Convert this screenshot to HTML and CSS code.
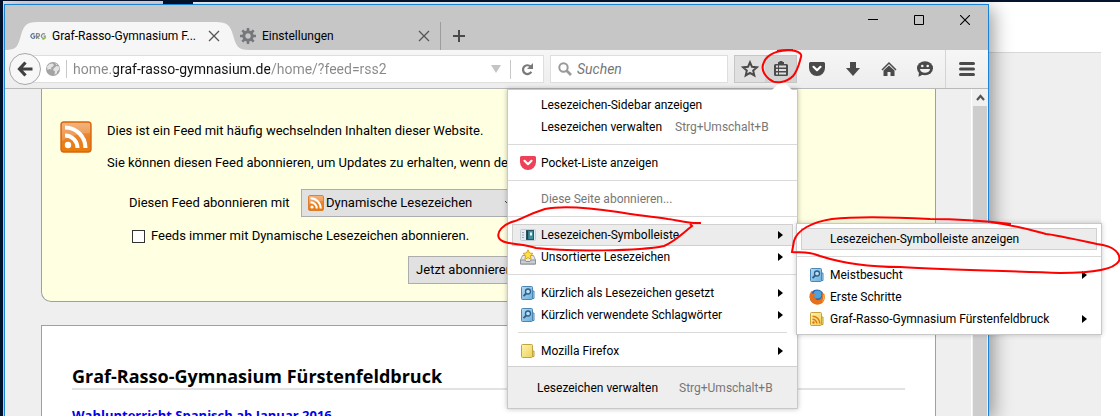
FILE: index.html
```
<!DOCTYPE html>
<html lang="de">
<head>
  <meta charset="UTF-8">
  <meta name="viewport" content="width=device-width, initial-scale=1.0">
  <title>Graf-Rasso-Gymnasium Fürstenfeldbruck</title>
  <link rel="stylesheet" href="styles.css">
</head>
<body>
  <!-- shared icons -->
  <svg class="defs" width="0" height="0" aria-hidden="true">
    <defs>
      <linearGradient id="orange" x1="0" y1="0" x2="0" y2="1">
        <stop offset="0" stop-color="#f0a566"/>
        <stop offset="0.5" stop-color="#e98127"/>
        <stop offset="1" stop-color="#e87d0a"/>
      </linearGradient>
      <linearGradient id="blue" x1="0" y1="0" x2="1" y2="1">
        <stop offset="0" stop-color="#b4daf1"/>
        <stop offset="1" stop-color="#6fb0dc"/>
      </linearGradient>
      <linearGradient id="yellow" x1="0" y1="0" x2="1" y2="1">
        <stop offset="0" stop-color="#fdf3b0"/>
        <stop offset="1" stop-color="#ecd25c"/>
      </linearGradient>
      <symbol id="i-rss" viewBox="0 0 32 32">
        <rect x="1" y="1" width="30" height="30" rx="3" fill="url(#orange)" stroke="#d9660f" stroke-width="1.4"/>
        <path d="M2 2h28v10C20 12 10 15 2 20z" fill="#fff" opacity=".18"/>
        <circle cx="8" cy="24" r="3.2" fill="#fff"/>
        <path d="M5 14.500a12.500 12.500 0 0 1 12.500 12.500M5 6.500a20.500 20.500 0 0 1 20.500 20.500" fill="none" stroke="#fff" stroke-width="4"/>
      </symbol>
      <symbol id="i-search-folder" viewBox="0 0 16 16">
        <path d="M12 6h2v7.500h-2z" fill="#b9dcf2" stroke="#4a87b5"/>
        <rect x="1.500" y="1.500" width="11" height="13" rx="1" fill="url(#blue)" stroke="#4a87b5"/>
        <circle cx="8" cy="6.500" r="2.500" fill="#b9dff5" stroke="#2d5f8a" stroke-width="1.300"/>
        <path d="M6.200 8.500L3.500 11.200" stroke="#2d5f8a" stroke-width="1.800"/>
      </symbol>
      <symbol id="i-folder" viewBox="0 0 16 16">
        <path d="M12 8h2v5.500h-2z" fill="#f8e68a" stroke="#b99a32"/>
        <rect x="1.500" y="1.500" width="11" height="13" rx="1" fill="url(#yellow)" stroke="#c2a43c"/>
      </symbol>
      <symbol id="i-feed-folder" viewBox="0 0 16 16">
        <path d="M12 6h2v7.500h-2z" fill="#f8e68a" stroke="#b99a32"/>
        <rect x="1.500" y="1.500" width="11" height="13" rx="1" fill="url(#yellow)" stroke="#c2a43c"/>
        <circle cx="4.500" cy="11.500" r="1.200" fill="#e5780b"/>
        <path d="M3.500 8.200a4.300 4.300 0 0 1 4.300 4.300M3.500 5.200a7.300 7.300 0 0 1 7.300 7.300" fill="none" stroke="#e5780b" stroke-width="1.500"/>
      </symbol>
      <symbol id="i-close" viewBox="0 0 12 12">
        <path d="M1 1l10 10M11 1L1 11" stroke="#555" stroke-width="1.300"/>
      </symbol>
      <symbol id="i-pocket" viewBox="0 0 16 16">
        <path d="M1.500 1h13A1.500 1.500 0 0 1 16 2.500V7a8 8 0 0 1-16 0V2.500A1.500 1.500 0 0 1 1.500 1z"/>
        <path d="M4.500 5.800L8 9.200l3.500-3.400" fill="none" stroke="#fff" stroke-width="2.200" stroke-linecap="round" stroke-linejoin="round"/>
      </symbol>
    </defs>
  </svg>

  <div class="back-top"></div>
  <div class="back-page">
    <div class="back-page-head"></div>
  </div>

  <div class="window">
    <header class="titlebar">
      <div class="tab active">
        <svg class="tab-shape" viewBox="0 0 244 28" preserveAspectRatio="none" aria-hidden="true">
          <path d="M0 28C12 28 13 24 16 13C19 3 22 0 32 0H211C222 0 225 3 228 13C231 24 233 28 244 28z" fill="#f6f6f6"/>
        </svg>
        <svg class="favicon" viewBox="0 0 16 16" aria-hidden="true">
          <path d="M4.500 6.300a2.200 2.200 0 1 0 .2 3.300V8.200H3.200" fill="none" stroke="#55759a" stroke-width="1.200"/>
          <path d="M6.500 11V5.700h1.700a1.300 1.300 0 0 1 0 2.700H6.600l2.700 2.500" fill="none" stroke="#888" stroke-width="1.200"/>
          <path d="M15 6.300a2.200 2.200 0 1 0 .2 3.300V8.200h-1.600" fill="none" stroke="#8a8f88" stroke-width="1.200"/>
          <path d="M12 10.700l1.500.5 1.700-1" fill="none" stroke="#79c143" stroke-width="1.200"/>
        </svg>
        <span class="tab-label">Graf-Rasso-Gymnasium F...</span>
        <button class="tab-close" aria-label="Tab schließen"><svg width="12" height="12"><use href="#i-close"/></svg></button>
      </div>
      <div class="tab">
        <svg class="favicon" viewBox="0 0 16 16" aria-hidden="true">
          <circle cx="8" cy="8" r="4.200" fill="none" stroke="#74777b" stroke-width="3"/>
          <path d="M8 0v3M8 13v3M0 8h3M13 8h3M2.300 2.300l2.200 2.200M11.500 11.500l2.200 2.200M2.300 13.700l2.200-2.200M11.500 4.500l2.200-2.200" stroke="#74777b" stroke-width="2.600"/>
        </svg>
        <span class="tab-label">Einstellungen</span>
        <button class="tab-close" aria-label="Tab schließen"><svg width="12" height="12"><use href="#i-close"/></svg></button>
      </div>
      <button class="new-tab" aria-label="Neuer Tab">
        <svg width="12" height="12" viewBox="0 0 12 12"><path d="M6 0v12M0 6h12" stroke="#4a4a4a" stroke-width="2"/></svg>
      </button>
      <div class="window-controls">
        <button aria-label="Minimieren"><svg width="10" height="10"><path d="M0 4.500h10" stroke="#000"/></svg></button>
        <button aria-label="Maximieren"><svg width="10" height="10"><path d="M.5.500h9v9h-9z" fill="none" stroke="#000"/></svg></button>
        <button aria-label="Schließen"><svg width="10" height="10"><path d="M0 0l10 10M10 0L0 10" stroke="#000" stroke-width="1.100"/></svg></button>
      </div>
    </header>

    <nav class="toolbar">
      <button class="back" aria-label="Zurück">
        <svg width="16" height="16" viewBox="0 0 16 16"><path d="M8.500 1.500L2.500 8l6 6.500M3 8h12.500" fill="none" stroke="#404040" stroke-width="3.200"/></svg>
      </button>
      <div class="urlbar">
        <svg class="globe" width="14" height="14" viewBox="0 0 14 14" aria-hidden="true">
          <circle cx="7" cy="7" r="7" fill="#a3a3a3"/>
          <path d="M1 4.500L3.500 2l3-.5L8 3 6.500 5 5 5.500 5.500 7.500 3.500 7 1.500 8zM8 6l2.500-2 2.500.5.300 3L11.500 9l-1 3-2 .5.500-3L7 8zM9 1l2.500 1.500-1 .8z" fill="#e4e4e4"/>
        </svg>
        <input class="url" type="text" aria-label="Adresse" value="home.graf-rasso-gymnasium.de/home/?feed=rss2">
        <svg class="url-drop" width="10" height="8" aria-hidden="true"><path d="M0 0h10L5 8z" fill="#c4c4c4"/></svg>
        <button class="reload" aria-label="Neu laden">
          <svg width="13" height="13" viewBox="0 0 13 13"><path d="M10.300 8.700A4.400 4.400 0 1 1 9.600 3.600" fill="none" stroke="#7a7a7a" stroke-width="2.200"/><path d="M12 0v6H6z" fill="#7a7a7a"/></svg>
        </button>
      </div>
      <div class="searchbar">
        <svg width="14" height="14" viewBox="0 0 14 14" aria-hidden="true"><circle cx="5.500" cy="5.500" r="4.200" fill="none" stroke="#999" stroke-width="2"/><path d="M8.500 8.500l4.500 4.500" stroke="#999" stroke-width="2.600"/></svg>
        <input type="text" aria-label="Suche" placeholder="Suchen">
      </div>
      <div class="bookmark-group">
        <button class="star" aria-label="Lesezeichen hinzufügen">
          <svg width="18" height="18" viewBox="0 0 18 18"><path d="M9 2.300l2 4.500 4.900.5-3.700 3.300 1.100 4.800L9 12.900l-4.300 2.500 1.100-4.800L2.100 7.300 7 6.800z" fill="none" stroke="#4a4a4a" stroke-width="2"/></svg>
        </button>
        <div class="bookmarks">
          <button class="bookmarks-btn" aria-label="Lesezeichen anzeigen">
            <svg width="16" height="16" viewBox="0 0 16 16"><path d="M5 3V1h1.500V0h3v1H11v2h2.500A1.500 1.500 0 0 1 15 4.500v9a1.500 1.500 0 0 1-1.500 1.500h-11A1.500 1.500 0 0 1 1 13.500v-9A1.500 1.500 0 0 1 2.500 3z" fill="#4a4a4a"/><path d="M3 5.500h2M6 5.500h7M3 9h2M6 9h7M3 12.500h2M6 12.500h7" stroke="#dedede" stroke-width="1.800"/></svg>
          </button>

          <div class="panel">
            <svg class="panel-arrow" width="20" height="10" aria-hidden="true"><path d="M0 10L7 3q3-3 6 0l7 7z" fill="#fff"/></svg>
            <ul class="menu">
              <li><button class="item"><span class="icon"></span>Lesezeichen-Sidebar anzeigen</button></li>
              <li><button class="item"><span class="icon"></span>Lesezeichen verwalten <kbd>Strg+Umschalt+B</kbd></button></li>
              <li class="sep"></li>
              <li><button class="item"><svg class="icon pocket"><use href="#i-pocket"/></svg>Pocket-Liste anzeigen</button></li>
              <li class="sep"></li>
              <li><button class="item" disabled><span class="icon"></span>Diese Seite abonnieren...</button></li>
              <li class="sep"></li>
              <li class="has-sub">
                <button class="item selected">
                  <svg class="icon" viewBox="0 0 16 16"><rect x=".5" y="2.500" width="15" height="11" rx="1" fill="#e3eaf0" stroke="#c3ccd4"/><path d="M2 5.500h2M2 8h2M2 10.500h2" stroke="#9aa7b3"/><rect x="6.500" y="3.500" width="7" height="9" fill="#3f8f9c" stroke="#2b5566"/><path d="M7.500 4v8" stroke="#1d3d50" stroke-width="1.500"/><rect x="10" y="5.500" width="2" height="3" fill="#e9f5f6"/></svg>
                  Lesezeichen-Symbolleiste<span class="more"></span>
                </button>
                <div class="submenu">
                  <ul class="menu">
                    <li><button class="item selected"><span class="icon"></span>Lesezeichen-Symbolleiste anzeigen</button></li>
                    <li class="sep"></li>
                    <li><button class="item"><svg class="icon"><use href="#i-search-folder"/></svg>Meistbesucht<span class="more"></span></button></li>
                    <li><button class="item">
                      <svg class="icon" viewBox="0 0 16 16"><circle cx="8" cy="7.800" r="7.300" fill="#2a62b0"/><circle cx="8.500" cy="5.500" r="4" fill="#4fa3dd"/><path d="M.8 4.500C.2 8 .6 11 2.800 13.300c3 3.200 8.200 3 11 .2 2.200-2.300 2.600-6 1.300-9.300-.2 1-.4 1.400-.8 1.700-.2-1-.8-2.200-1.600-2.900.5 2.200.8 4.200-.3 6-1.300 2-4.200 2.600-6.100 1C5.800 9.700 7 9.600 8 9c-1-.8-3-.3-3.300-1.500-.2-.9 1-.9 1.900-1.500C5.800 5 4.800 4.600 3.800 4.700 3 4 2.800 3 3.200 1.800 2 2.400 1.300 3.500 1.200 5z" fill="#e8701a"/><path d="M15.300 5c.6 3.400-.4 6.500-2.500 8.300 1-2 1.500-3.600 1.500-7.400z" fill="#fcc52a"/></svg>
                      Erste Schritte</button></li>
                    <li><button class="item"><svg class="icon"><use href="#i-feed-folder"/></svg>Graf-Rasso-Gymnasium Fürstenfeldbruck<span class="more"></span></button></li>
                  </ul>
                </div>
              </li>
              <li><button class="item">
                <svg class="icon" viewBox="0 0 16 16"><path d="M2.500 6.500h11l2 4.500v4H.5v-4z" fill="#e6e9ec" stroke="#9aa0a6"/><path d="M.5 11H5l1 1.500h4L11 11h4.500v4H.5z" fill="#c9ced3" stroke="#8b9198"/><path d="M8 .8l1.500 3.200 3.500.4-2.600 2.400.7 3.500L8 8.600l-3.100 1.700.7-3.500L3 4.400 6.500 4z" fill="#ffe04a" stroke="#d6a51c"/></svg>
                Unsortierte Lesezeichen<span class="more"></span></button></li>
              <li class="sep"></li>
              <li><button class="item"><svg class="icon"><use href="#i-search-folder"/></svg>Kürzlich als Lesezeichen gesetzt<span class="more"></span></button></li>
              <li><button class="item"><svg class="icon"><use href="#i-search-folder"/></svg>Kürzlich verwendete Schlagwörter<span class="more"></span></button></li>
              <li class="sep inset"></li>
              <li><button class="item"><svg class="icon"><use href="#i-folder"/></svg>Mozilla Firefox<span class="more"></span></button></li>
            </ul>
            <button class="panel-footer">Lesezeichen verwalten <kbd>Strg+Umschalt+B</kbd></button>
          </div>
        </div>
      </div>
      <div class="tools">
        <button aria-label="Pocket"><svg class="icon dark"><use href="#i-pocket"/></svg></button>
        <button aria-label="Downloads"><svg class="icon" viewBox="0 0 16 16"><path d="M5 1h6v6h4l-7 8-7-8h4z" fill="#4a4a4a"/></svg></button>
        <button aria-label="Startseite"><svg class="icon" viewBox="0 0 16 16"><path d="M1 9l7-7 7 7" fill="none" stroke="#4a4a4a" stroke-width="1.500"/><path d="M8 4.500l5.500 5V15H9.500v-4h-3v4h-4V9.500z" fill="#4a4a4a"/></svg></button>
        <button aria-label="Hello"><svg class="icon" viewBox="0 0 16 16"><ellipse cx="8" cy="7.200" rx="8" ry="7" fill="#4a4a4a"/><path d="M2 11l-.5 4.800L7 13z" fill="#4a4a4a"/><circle cx="5.300" cy="5" r="1.300" fill="#f2f2f2"/><circle cx="10.700" cy="5" r="1.300" fill="#f2f2f2"/><path d="M3 8h10a5 3.800 0 0 1-10 0z" fill="#f2f2f2"/></svg></button>
      </div>
      <button class="app-menu" aria-label="Menü öffnen">
        <svg width="16" height="14" viewBox="0 0 16 14"><path d="M1.500 1.500h13M1.500 7h13M1.500 12.500h13" stroke="#4a4a4a" stroke-width="3" stroke-linecap="round"/></svg>
      </button>
    </nav>

    <div class="viewport">
      <main class="page">
        <section class="feed-header">
          <svg class="feed-icon" width="32" height="32" aria-hidden="true"><use href="#i-rss"/></svg>
          <div class="feed-text">
            <p>Dies ist ein Feed mit häufig wechselnden Inhalten dieser Website.</p>
            <p>Sie können diesen Feed abonnieren, um Updates zu erhalten, wenn der</p>
            <form class="subscribe">
              <div class="subscribe-row">
                <label for="reader">Diesen Feed abonnieren mit</label>
                <div class="reader">
                  <svg width="16" height="16" aria-hidden="true"><use href="#i-rss"/></svg>
                  <select id="reader"><option>Dynamische Lesezeichen</option></select>
                  <svg class="chevron" width="10" height="6" aria-hidden="true"><path d="M1 1l4 4 4-4" fill="none" stroke="#444"/></svg>
                </div>
              </div>
              <div class="always">
                <input type="checkbox" id="always">
                <label for="always">Feeds immer mit Dynamische Lesezeichen abonnieren.</label>
              </div>
              <button class="subscribe-btn" type="button">Jetzt abonnieren</button>
            </form>
          </div>
        </section>
        <article class="feed-content">
          <h1>Graf-Rasso-Gymnasium Fürstenfeldbruck</h1>
          <h2><a href="#">Wahlunterricht Spanisch ab Januar 2016</a></h2>
        </article>
      </main>
      <div class="scrollbar">
        <svg width="15" height="17" aria-hidden="true"><path d="M4 11l3.500-4 3.500 4" fill="none" stroke="#555" stroke-width="2.200"/></svg>
        <div class="thumb"></div>
      </div>
    </div>
  </div>

  <svg class="marks" width="1120" height="416" aria-hidden="true">
    <path d="M777 51C792 48 803 52 801 57C799 64 798 70 793 76C787 82 776 85 769 79C762 73 761 68 764 62C767 55 775 50 793 50"/>
    <path d="M701 223C688 224 678 220 668 219C650 216 634 215 618 212C598 209 565 205 545 209C529 214 521 219 515 221C503 224 496 232 499 238C503 245 520 243 536 248C570 252 640 251 664 246C676 241 684 232 692 226L690 224"/>
    <path d="M1011 224C985 221 955 219 930 219C890 217 860 216 832 219C812 222 797 230 794 241L792 252C800 253 808 251 820 256C845 264 870 267 900 267C950 270 1010 271 1060 273C1092 273 1114 270 1119 261C1121 254 1115 246 1097 244C1074 239 1050 234 1046 234C1030 230 1020 226 990 222"/>
  </svg>
</body>
</html>
```
FILE: styles.css
```
* {
  margin: 0;
  padding: 0;
  box-sizing: border-box;
}

body {
  height: 100vh;
  overflow: hidden;
  position: relative;
  background: #04142e;
  font-family: Roboto, "Segoe UI", sans-serif;
  font-size: 12px;
  color: #000;
}

button {
  border: none;
  background: none;
  font: inherit;
  color: inherit;
}

input, select {
  font: inherit;
}

.defs {
  position: absolute;
}

/* windows lying behind the browser */
.back-top {
  position: absolute;
  left: 3px;
  top: 1px;
  width: 160px;
  height: 415px;
  background: #e4dfe8;
}

.back-page {
  position: absolute;
  left: 193px;
  right: 0;
  top: 2px;
  bottom: 0;
  background: #efefef;
  border-right: 19px solid #fff;
}

.back-page-head {
  height: 51px;
  background: #fff;
  border-bottom: 1px solid #d8d8d8;
}

.window {
  position: absolute;
  left: 4px;
  right: 131px;
  top: 4px;
  bottom: 0;
  display: flex;
  flex-direction: column;
  border: 1px solid #1883d7;
  border-bottom: none;
  box-shadow: 4px 4px 18px rgba(0, 0, 0, 0.4);
}

/* tabs */
.titlebar {
  display: flex;
  align-items: flex-end;
  height: 45px;
  background: #c6c6c6;
}

.tab {
  position: relative;
  display: flex;
  align-items: center;
  gap: 6px;
  width: 201px;
  height: 28px;
  padding-right: 10px;
  border-right: 1px solid #9c9c9c;
}

.tab.active {
  width: 235px;
  padding-left: 25px;
  padding-right: 20px;
  border-right: none;
}

.tab-shape {
  position: absolute;
  left: 0;
  top: 0;
  width: 244px;
  height: 28px;
}

.tab > *:not(.tab-shape) {
  position: relative;
}

.favicon {
  width: 16px;
  height: 16px;
}

.tab-label {
  flex: 1;
  white-space: nowrap;
}

.tab-close {
  display: flex;
}

.new-tab {
  display: flex;
  align-items: center;
  height: 28px;
  padding: 0 12px;
}

.window-controls {
  display: flex;
  align-self: flex-start;
  margin-left: auto;
}

.window-controls button {
  display: flex;
  align-items: center;
  justify-content: center;
  width: 46px;
  height: 30px;
}

/* navigation toolbar */
.toolbar {
  display: flex;
  align-items: center;
  height: 39px;
  padding-left: 4px;
  background: linear-gradient(#f6f6f6, #ededed);
  border-bottom: 1px solid #b9b9b9;
}

.back {
  position: relative;
  z-index: 1;
  display: flex;
  align-items: center;
  justify-content: center;
  width: 32px;
  height: 32px;
  border: 1px solid #a8a8a8;
  border-radius: 50%;
  background: #f7f7f7;
}

.urlbar,
.searchbar {
  display: flex;
  align-items: center;
  height: 28px;
  background: #fff;
  border: 1px solid #dedede;
}

.urlbar {
  flex: 1;
  margin-left: -10px;
  padding-left: 14px;
}

.url {
  flex: 1;
  min-width: 0;
  height: 18px;
  margin-left: 6px;
  padding-left: 6px;
  border: none;
  border-left: 1px solid #c8c8c8;
  font-size: 14px;
  color: transparent;
  /* the domain is darker than the rest of the address */
  background: linear-gradient(90deg, #888 47px, #111 47px, #111 203px, #888 203px);
  -webkit-background-clip: text;
  background-clip: text;
}

.url-drop {
  margin-right: 9px;
}

.reload {
  display: flex;
  align-items: center;
  justify-content: center;
  width: 33px;
  height: 19px;
  border-left: 1px solid #c8c8c8;
}

.searchbar {
  width: 178px;
  margin: 0 6px;
  padding-left: 7px;
  gap: 5px;
}

.searchbar input {
  min-width: 0;
  flex: 1;
  border: none;
  font-size: 14px;
}

.searchbar input::placeholder {
  color: #777;
  font-style: italic;
}

.bookmark-group {
  display: flex;
  width: 63px;
  height: 28px;
  background: #e0e0e0;
  border: 1px solid #c6c6c6;
}

.star,
.bookmarks-btn {
  display: flex;
  align-items: center;
  justify-content: center;
  width: 31px;
  height: 26px;
}

.bookmarks {
  position: relative;
}

.bookmarks-btn {
  background: #d2d2d2;
}

.tools {
  display: flex;
  padding: 0 2px;
}

.tools button {
  display: flex;
  align-items: center;
  justify-content: center;
  width: 36px;
  height: 28px;
}

.app-menu {
  display: flex;
  align-items: center;
  justify-content: center;
  width: 43px;
  height: 38px;
  border-left: 1px solid #d4d4d4;
}

.icon {
  flex: none;
  width: 16px;
  height: 16px;
}

.dark {
  fill: #4a4a4a;
}

.pocket {
  fill: #ee4056;
}

/* bookmarks panel */
.panel {
  position: absolute;
  z-index: 10;
  top: 33px;
  right: -2px;
  width: 291px;
  background: #fff;
  border: 1px solid #c8c8c8;
  box-shadow: 0 0 5px rgba(0, 0, 0, 0.25);
}

.panel-arrow {
  position: absolute;
  right: 5px;
  top: -10px;
}

.menu {
  list-style: none;
  padding: 4px;
}

.item {
  display: flex;
  align-items: center;
  width: 100%;
  height: 22px;
  padding: 0 9px 0 7px;
  gap: 5px;
  border: 1px solid transparent;
  text-align: left;
  white-space: nowrap;
}

.item.selected {
  background: #ececec;
  border-color: #d0d0d0;
}

.item:disabled {
  color: #777;
}

.item kbd {
  margin-left: 8px;
}

kbd {
  font-family: inherit;
  color: #777;
}

.more {
  margin-left: auto;
  border: 4px solid transparent;
  border-left: 5px solid #000;
  border-right: none;
}

.sep {
  height: 1px;
  margin: 6px -4px 7px;
  background: #dadada;
}

.sep.inset {
  margin-left: 6px;
  margin-right: 6px;
}

.has-sub {
  position: relative;
}

.submenu {
  position: absolute;
  left: 100%;
  top: -1px;
  width: 306px;
  margin-left: 3px;
  background: #fff;
  border: 1px solid #c8c8c8;
  box-shadow: 0 0 5px rgba(0, 0, 0, 0.2);
}

.panel-footer {
  display: flex;
  align-items: center;
  gap: 21px;
  width: 100%;
  height: 42px;
  padding-left: 29px;
  background: #eee;
  border-top: 1px solid #d0d0d0;
}

/* feed page */
.viewport {
  flex: 1;
  display: flex;
  min-height: 0;
  background: #efefef;
}

.page {
  flex: 1;
  overflow: hidden;
  padding: 0 35px 0 36px;
}

.feed-header {
  display: flex;
  gap: 15px;
  height: 213px;
  padding: 32px 18px 0;
  background: #ffffe1;
  border: 1px solid #a0a0a0;
  border-top: none;
  border-radius: 0 0 10px 10px;
  font-size: 13px;
}

.feed-icon {
  flex: none;
}

.feed-text {
  line-height: 20px;
  white-space: nowrap;
}

.feed-text p {
  margin-bottom: 12px;
}

.subscribe {
  display: flex;
  flex-direction: column;
  width: 414px;
  padding-left: 22px;
}

.subscribe-row {
  display: flex;
  align-items: center;
  justify-content: space-between;
  margin-top: 4px;
}

.reader {
  display: flex;
  align-items: center;
  width: 220px;
  height: 28px;
  padding: 0 6px;
  background: #e1e1e1;
  border: 1px solid #adadad;
}

.reader select {
  flex: 1;
  min-width: 0;
  padding-left: 2px;
  border: none;
  background: none;
  appearance: none;
}

.always {
  display: flex;
  align-items: center;
  gap: 6px;
  height: 20px;
  margin: 9px 0 10px 3px;
}

.always input {
  appearance: none;
  width: 13px;
  height: 13px;
  background: #fff;
  border: 1px solid #333;
}

.subscribe-btn {
  align-self: flex-end;
  width: 113px;
  height: 28px;
  background: #e1e1e1;
  border: 1px solid #adadad;
}

.feed-content {
  margin-top: 23px;
  padding: 38px 30px;
  background: #fff;
  border: 1px solid #a0a0a0;
  font-family: "Open Sans", "Segoe UI", sans-serif;
}

.feed-content h1 {
  font-size: 18px;
  line-height: 24px;
  border-bottom: 2px solid #e2e2e2;
}

.feed-content h2 {
  margin-top: 15px;
  font-size: 13px;
  line-height: 20px;
}

.feed-content a {
  color: #0000ee;
  text-decoration: none;
}

.scrollbar {
  display: flex;
  flex-direction: column;
  width: 17px;
  padding: 0 1px;
  background: #f0f0f0;
  border-left: 1px solid #fff;
}

.thumb {
  flex: 1;
  background: #cdcdcd;
}

/* red pen marks */
.marks {
  position: absolute;
  left: 0;
  top: 0;
  z-index: 20;
  pointer-events: none;
  fill: none;
  stroke: #f00;
  stroke-width: 2;
}
```
